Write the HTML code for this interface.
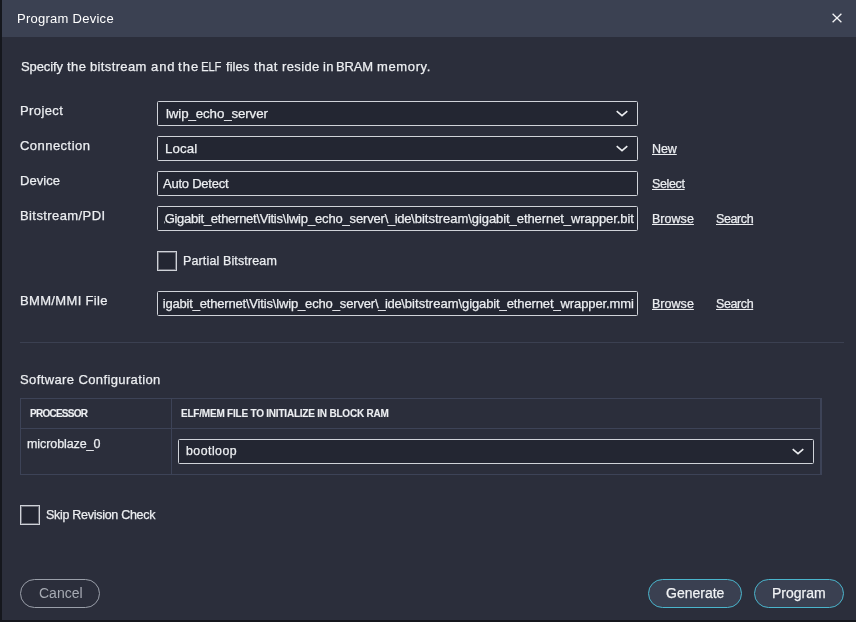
<!DOCTYPE html>
<html><head><meta charset="utf-8"><title>Program Device</title>
<style>
html,body{margin:0;padding:0;}
body{width:856px;height:622px;overflow:hidden;background:#2b2e3b;position:relative;font-family:"Liberation Sans","DejaVu Sans",sans-serif;color:#f2f3f5;font-size:13px;}
.abs{position:absolute;white-space:nowrap;}
#edgeL{left:0;top:0;width:2px;height:622px;background:#15171d;}
#edgeB{left:0;top:620px;width:856px;height:2px;background:#15171d;}
#title{left:2px;top:0;width:854px;height:37px;background:#3b4152;}
.t{position:absolute;white-space:nowrap;line-height:16px;height:16px;color:#eceef1;-webkit-text-stroke:0.25px #eceef1;will-change:transform;}
.box{position:absolute;box-sizing:border-box;border:1px solid #d0d3d9;background:#232632;border-radius:1.5px;}
.clip{position:absolute;overflow:hidden;}
.link{text-decoration:underline;text-underline-offset:1px;text-decoration-thickness:1px;}
.chk{position:absolute;box-sizing:border-box;width:20px;height:20px;border:1px solid #cfd2d8;background:#232632;border-radius:0;box-shadow:inset 0 0 0 1px rgba(207,210,216,0.4);}
.btn{position:absolute;box-sizing:border-box;height:29px;border-radius:15px;border:1px solid #4ab5cc;background:#3a4051;}
.btn .t{font-size:14px;color:#f2f3f5;}
svg{position:absolute;overflow:visible;}
</style></head><body>
<div class="abs" id="edgeL"></div>
<div class="abs" id="title"></div>
<svg id="xx" style="left:832px;top:13px" width="10" height="10" viewBox="0 0 10 10"><path d="M0.6 0.8 L9.4 9.2 M9.4 0.8 L0.6 9.2" stroke="#f2f3f5" stroke-width="1.3" fill="none"/></svg>

<div class="box" id="b1" style="left:157px;top:101px;width:481px;height:25px;"></div>
<div class="box" id="b2" style="left:157px;top:136px;width:481px;height:25px;"></div>
<div class="box" id="b3" style="left:157px;top:171px;width:481px;height:25px;"></div>
<div class="box" id="b4" style="left:157px;top:206px;width:481px;height:25px;"></div>
<div class="box" id="b5" style="left:157px;top:291px;width:481px;height:25px;"></div>
<div class="clip" style="left:164px;top:207px;width:473px;height:23px;"><div class="t" id="v4" style="right:3px;top:4px;font-size:13px;">C:\<span id="v4s0" style="letter-spacing:-0.272px">Gigabit_ethernet\Vitis</span><span id="v4s1" style="letter-spacing:-0.158px">\lwip_echo_server</span><span id="v4s2" style="letter-spacing:-0.400px">\_ide</span><span id="v4s3" style="letter-spacing:0.022px">\bitstream</span><span id="v4s4" style="letter-spacing:-0.075px">\gigabit_ethernet_wrapper.bit</span></div></div>
<div class="clip" style="left:163px;top:292px;width:474px;height:23px;"><div class="t" id="v5" style="right:3px;top:4px;font-size:13px;">C:\G<span id="v5s0" style="letter-spacing:-0.188px">igabit_ethernet\Vitis</span><span id="v5s1" style="letter-spacing:-0.146px">\lwip_echo_server</span><span id="v5s2" style="letter-spacing:-0.400px">\_ide</span><span id="v5s3" style="letter-spacing:0.022px">\bitstream</span><span id="v5s4" style="letter-spacing:-0.114px">\gigabit_ethernet_wrapper.mmi</span></div></div>

<svg class="chev" style="left:616px;top:110px" width="12" height="8" viewBox="0 0 12 8"><path d="M0.7 1.2 L6 5.6 L11.3 1.2" stroke="#eceef1" stroke-width="1.6" fill="none"/></svg>
<svg class="chev" style="left:616px;top:145px" width="12" height="8" viewBox="0 0 12 8"><path d="M0.7 1.2 L6 5.6 L11.3 1.2" stroke="#eceef1" stroke-width="1.6" fill="none"/></svg>

<div class="chk" id="c1" style="left:157px;top:251px;"></div>
<div class="abs" id="sep" style="left:20px;top:342px;width:824px;height:1px;background:#3b4051;"></div>

<div class="abs" id="tbl" style="left:20px;top:398px;width:802px;height:77px;box-sizing:border-box;border:1px solid #3d4357;border-right-width:2px;"></div>
<div class="abs" style="left:21px;top:428px;width:799px;height:1px;background:#3d4357;"></div>
<div class="abs" style="left:171px;top:399px;width:1px;height:75px;background:#3d4357;"></div>
<div class="box" id="b6" style="left:178px;top:439px;width:636px;height:25px;"></div>
<svg class="chev" style="left:792px;top:448px" width="12" height="8" viewBox="0 0 12 8"><path d="M0.7 1.2 L6 5.6 L11.3 1.2" stroke="#eceef1" stroke-width="1.6" fill="none"/></svg>

<div class="chk" id="c2" style="left:20px;top:505px;"></div>

<div class="t " id="tt" style="left:17px;top:11px;font-size:13px;font-weight:400;letter-spacing:0.263px;color:#fff;-webkit-text-stroke:0;">Program Device</div>
<div class="t " id="d0" style="left:21px;top:59px;font-size:13px;font-weight:400;letter-spacing:-0.120px;">Specify</div>
<div class="t " id="d1" style="left:67px;top:59px;font-size:13px;font-weight:400;letter-spacing:0.450px;">the</div>
<div class="t " id="d2" style="left:90px;top:59px;font-size:13px;font-weight:400;letter-spacing:0.360px;">bitstream</div>
<div class="t " id="d3" style="left:151px;top:59px;font-size:13px;font-weight:400;letter-spacing:0.950px;">and</div>
<div class="t " id="d4" style="left:178px;top:59px;font-size:13px;font-weight:400;letter-spacing:1.080px;">the</div>
<div class="t " id="d5" style="left:201px;top:59px;font-size:13px;font-weight:400;letter-spacing:-0.200px;transform:scaleX(0.87);transform-origin:0 50%;">ELF</div>
<div class="t " id="d6" style="left:226px;top:59px;font-size:13px;font-weight:400;letter-spacing:0.045px;">files</div>
<div class="t " id="d7" style="left:254px;top:59px;font-size:13px;font-weight:400;letter-spacing:0.540px;">that</div>
<div class="t " id="d8" style="left:282px;top:59px;font-size:13px;font-weight:400;letter-spacing:0.360px;">reside</div>
<div class="t " id="d9" style="left:323px;top:59px;font-size:13px;font-weight:400;letter-spacing:0.360px;">in</div>
<div class="t " id="d10" style="left:336px;top:59px;font-size:13px;font-weight:400;letter-spacing:-0.120px;">BRAM</div>
<div class="t " id="d11" style="left:377px;top:59px;font-size:13px;font-weight:400;letter-spacing:0.630px;">memory.</div>
<div class="t " id="l1" style="left:20px;top:103px;font-size:13px;font-weight:400;letter-spacing:0.390px;">Project</div>
<div class="t " id="l2" style="left:20px;top:138px;font-size:13px;font-weight:400;letter-spacing:0.460px;">Connection</div>
<div class="t " id="l3" style="left:20px;top:173px;font-size:13px;font-weight:400;letter-spacing:0.072px;">Device</div>
<div class="t " id="l4" style="left:20px;top:208px;font-size:13px;font-weight:400;letter-spacing:0.405px;">Bitstream/PDI</div>
<div class="t " id="l5" style="left:20px;top:293px;font-size:13px;font-weight:400;letter-spacing:0.344px;">BMM/MMI File</div>
<div class="t " id="v1" style="left:166px;top:106px;font-size:13.3px;font-weight:400;letter-spacing:-0.108px;">lwip_echo_server</div>
<div class="t " id="v2" style="left:165px;top:141px;font-size:13.3px;font-weight:400;letter-spacing:0.090px;">Local</div>
<div class="t " id="v3" style="left:163px;top:176px;font-size:13px;font-weight:400;letter-spacing:-0.234px;">Auto Detect</div>
<div class="t link" id="k1" style="left:652px;top:141px;font-size:12.5px;font-weight:400;letter-spacing:-0.090px;">New</div>
<div class="t link" id="k2" style="left:652px;top:176px;font-size:12.5px;font-weight:400;letter-spacing:-0.360px;">Select</div>
<div class="t link" id="k3" style="left:652px;top:211px;font-size:12.5px;font-weight:400;letter-spacing:0.036px;">Browse</div>
<div class="t link" id="k4" style="left:716px;top:211px;font-size:12.5px;font-weight:400;letter-spacing:-0.396px;">Search</div>
<div class="t link" id="k5" style="left:652px;top:296px;font-size:12.5px;font-weight:400;letter-spacing:0.036px;">Browse</div>
<div class="t link" id="k6" style="left:716px;top:296px;font-size:12.5px;font-weight:400;letter-spacing:-0.396px;">Search</div>
<div class="t " id="cl1" style="left:183px;top:253px;font-size:12.5px;font-weight:400;letter-spacing:0.135px;">Partial Bitstream</div>
<div class="t " id="sc" style="left:20px;top:372px;font-size:13px;font-weight:400;letter-spacing:0.386px;">Software Configuration</div>
<div class="t " id="h1" style="left:30px;top:406px;font-size:10px;font-weight:700;letter-spacing:-0.750px;-webkit-text-stroke:0.12px #eceef1;">PROCESSOR</div>
<div class="t " id="h2" style="left:181px;top:406px;font-size:10px;font-weight:700;letter-spacing:-0.213px;-webkit-text-stroke:0.12px #eceef1;">ELF/MEM FILE TO INITIALIZE IN BLOCK RAM</div>
<div class="t " id="mb" style="left:27px;top:436px;font-size:12.5px;font-weight:400;letter-spacing:-0.082px;">microblaze_0</div>
<div class="t " id="v6" style="left:186px;top:443px;font-size:12.3px;font-weight:400;letter-spacing:0.489px;">bootloop</div>
<div class="t " id="cl2" style="left:46px;top:507px;font-size:12.5px;font-weight:400;letter-spacing:-0.290px;">Skip Revision Check</div>

<div class="btn" id="bc" style="left:20px;top:579px;width:80px;border-color:#9a9fa9;background:transparent;"><div class="t" id="bct" style="left:18px;top:5px;color:#a6aab3;-webkit-text-stroke:0;">Cancel</div></div>
<div class="btn" id="bg" style="left:648px;top:579px;width:94px;"><div class="t" id="bgt" style="left:17px;top:5px;">Generate</div></div>
<div class="btn" id="bp" style="left:754px;top:579px;width:90px;"><div class="t" id="bpt" style="left:17px;top:5px;">Program</div></div>

<div class="abs" id="edgeB"></div>
</body></html>
